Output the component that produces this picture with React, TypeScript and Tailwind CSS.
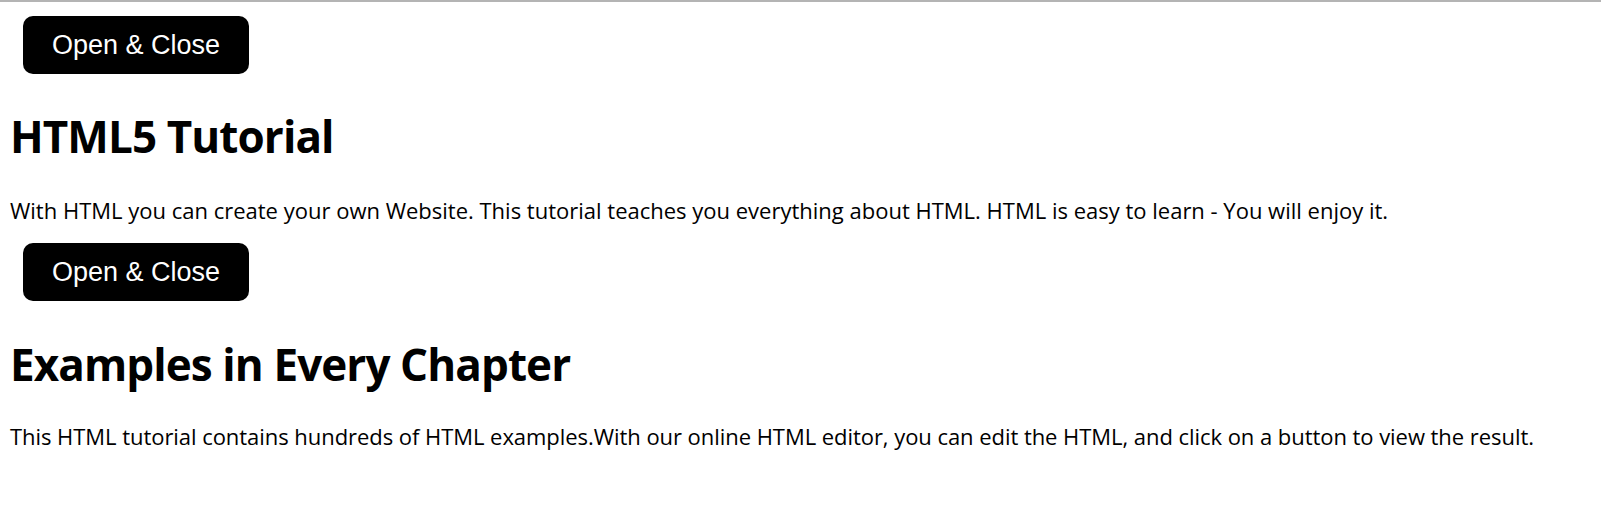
function ToggleButton() {
  return (
    <div className="pl-[23px]">
      <button className="w-[226px] h-[58px] rounded-[10px] bg-black text-white text-[27px] font-['Liberation_Sans',Arial,sans-serif]">
        Open &amp; Close
      </button>
    </div>
  )
}

export default function App() {
  return (
    <div className="min-h-screen bg-white border-t-2 border-[#b4b4b4] text-black font-['Open_Sans',sans-serif]">
      <div className="pt-[14px]">
        <ToggleButton />
      </div>
      <h1 className="pl-[10px] mt-[36px] text-[44px] leading-[52px] font-bold tracking-[-0.9px]">HTML5 Tutorial</h1>
      <p className="pl-[10px] mt-[33px] text-[22px] leading-[30px]">
        With HTML you can create your own Website. This tutorial teaches you everything about HTML. HTML is easy to learn - You will enjoy it.
      </p>
      <div className="mt-[18px]">
        <ToggleButton />
      </div>
      <h2 className="pl-[10px] mt-[37px] text-[44px] leading-[52px] font-bold tracking-[-0.9px]">Examples in Every Chapter</h2>
      <p className="pl-[10px] mt-[31px] text-[22px] leading-[30px] tracking-[-0.05px]">
        This HTML tutorial contains hundreds of HTML examples.With our online HTML editor, you can edit the HTML, and click on a button to view the result.
      </p>
    </div>
  )
}
